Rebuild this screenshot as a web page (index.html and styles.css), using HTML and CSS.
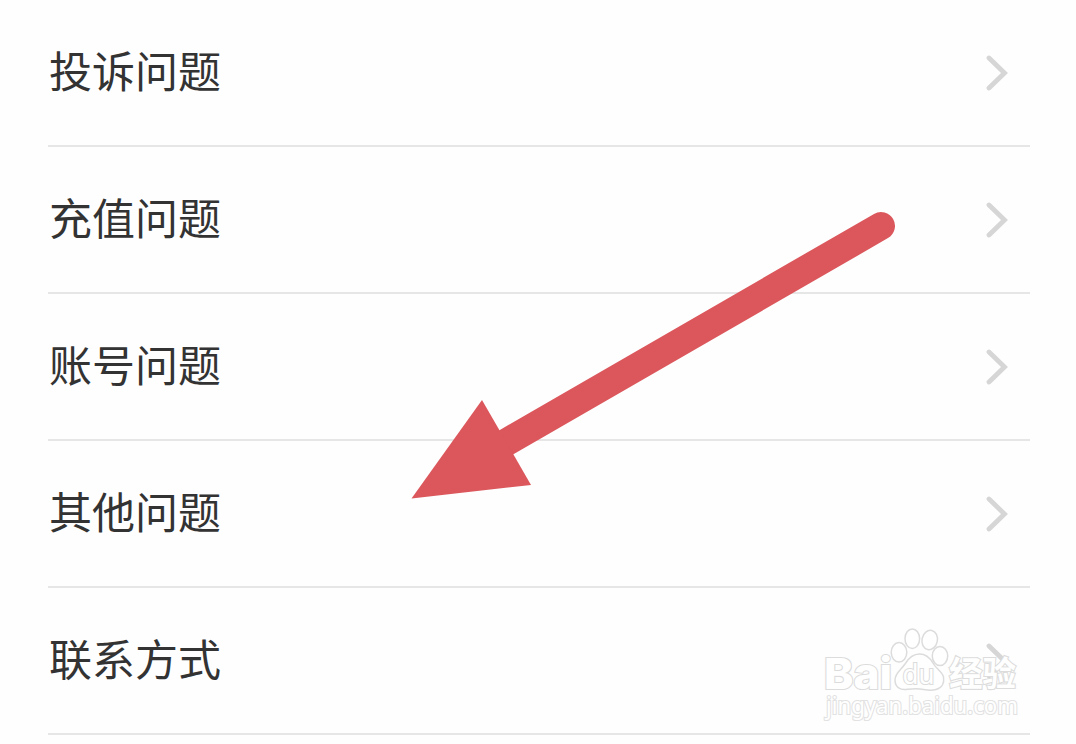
FILE: index.html
```html
<!DOCTYPE html>
<html lang="zh-CN">
<head>
<meta charset="utf-8">
<title>问题列表</title>
<link rel="stylesheet" href="styles.css">
</head>
<body>
<main class="screen">
  <ul class="menu">
    <li class="row"><span class="label">投诉问题</span><svg class="chevron" viewBox="0 0 22 36"><path d="M3 3L18.500 18L3 33"/></svg></li>
    <li class="row"><span class="label">充值问题</span><svg class="chevron" viewBox="0 0 22 36"><path d="M3 3L18.500 18L3 33"/></svg></li>
    <li class="row"><span class="label">账号问题</span><svg class="chevron" viewBox="0 0 22 36"><path d="M3 3L18.500 18L3 33"/></svg></li>
    <li class="row"><span class="label">其他问题</span><svg class="chevron" viewBox="0 0 22 36"><path d="M3 3L18.500 18L3 33"/></svg></li>
    <li class="row"><span class="label">联系方式</span><svg class="chevron" viewBox="0 0 22 36"><path d="M3 3L18.500 18L3 33"/></svg></li>
  </ul>
  <svg class="arrow" viewBox="0 0 1076 744">
    <path class="shaft" d="M506 442.500L881 226"/>
    <path class="head" d="M411.500 498.500L482 400L531 485Z"/>
  </svg>
  <svg class="watermark" viewBox="810 610 240 134">
    <text class="brand" x="824" y="689" textLength="68" lengthAdjust="spacingAndGlyphs">Bai</text>
    <ellipse cx="899" cy="652.300" rx="7.800" ry="9.700"/>
    <ellipse cx="912.300" cy="638.700" rx="7.300" ry="9.800"/>
    <ellipse cx="929.700" cy="640" rx="7.700" ry="9.700" transform="rotate(12 929.700 640)"/>
    <ellipse cx="940" cy="656" rx="7.700" ry="9.500"/>
    <path d="M919.500 654C912 654 908 659 905 664C901 670 895 673 895 680C895 687 900 690 906 689.500C911 689 915 688.500 919.500 689C925 690 930 691 936 689.500C942 688 944.500 683 943.500 677C942 671 936 669 933 663C930 658 926 654 919.500 654Z"/>
    <text class="du" x="902.500" y="684" textLength="32" lengthAdjust="spacingAndGlyphs">du</text>
    <text class="jing" x="949" y="686" textLength="67" lengthAdjust="spacingAndGlyphs">经验</text>
    <text class="url" x="826" y="714" textLength="192" lengthAdjust="spacingAndGlyphs">jingyan.baidu.com</text>
  </svg>
</main>
</body>
</html>
```
FILE: styles.css
```css
body {
  margin: 0;
  background: #fefefe;
  font-family: "Noto Sans CJK SC", sans-serif;
}
.screen {
  position: relative;
  height: 744px;
  overflow: hidden;
}
.menu {
  list-style: none;
  margin: 0;
  padding: 0 46px 0 48px;
}
.row {
  box-sizing: border-box;
  height: 147px;
  display: flex;
  align-items: center;
  justify-content: space-between;
  border-bottom: 2px solid #e6e6e6;
  padding-right: 22px;
}
.label {
  margin-left: 1px;
  padding-bottom: 7px;
  font-size: 43px;
  line-height: 60px;
  color: #333;
}
.chevron {
  width: 22px;
  height: 36px;
  fill: none;
  stroke: #d6d6d6;
  stroke-width: 4.800;
  stroke-linecap: round;
}
.arrow {
  position: absolute;
  inset: 0;
  width: 1076px;
  height: 744px;
}
.shaft {
  stroke: #db575c;
  stroke-width: 28;
  stroke-linecap: round;
}
.head {
  fill: #db575c;
}
.watermark {
  position: absolute;
  left: 810px;
  top: 610px;
  width: 240px;
  height: 134px;
  fill: #fff;
  stroke: #dcdcdc;
  stroke-width: 1.500;
}
.watermark text {
  paint-order: stroke;
  stroke-width: 2.200;
}
.watermark .brand {
  font: 800 43px Inter, sans-serif;
}
.watermark .du {
  font: 28px "Noto Sans", sans-serif;
}
.watermark .jing {
  font: bold 34px "Noto Sans CJK SC", sans-serif;
}
.watermark .url {
  font: 23px "Noto Sans", sans-serif;
  stroke: #e2e2e2;
}
```
